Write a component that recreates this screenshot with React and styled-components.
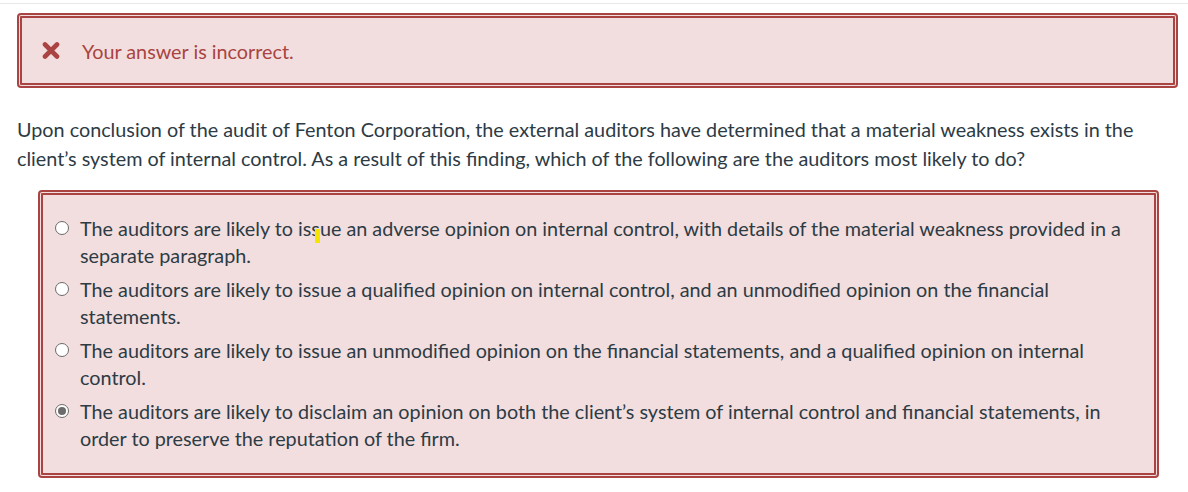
import React from 'react';
import styled, { createGlobalStyle } from 'styled-components';

const GlobalStyle = createGlobalStyle`
  body {
    margin: 0;
    background: #ffffff;
    font-family: Lato, "Open Sans", sans-serif;
    color: #2d3b45;
  }
`;

const Page = styled.div`
  padding-top: 3px;
`;

const TopRule = styled.div`
  height: 1px;
  background: #e8e8e8;
`;

const Content = styled.div`
  padding: 9px 10px 0 17px;
`;

const Alert = styled.div`
  display: flex;
  align-items: center;
  gap: 22px;
  height: 65px;
  padding: 0 20px;
  background: #f2dede;
  border: 5px double #a94442;
  border-radius: 4px;
  color: #a94442;
  font-size: 19.8px;
`;

const Question = styled.p`
  margin: 27px 0 17px;
  font-size: 19.8px;
  line-height: 29px;
  color: #2d3b45;
`;

const Answers = styled.div`
  position: relative;
  margin: 0 19px 0 21px;
  padding: 20px 12px 21px 12px;
  background: #f2dede;
  border: 5px double #a94442;
  border-radius: 4px;
  display: flex;
  flex-direction: column;
  gap: 7px;
`;

const Option = styled.label`
  display: flex;
  align-items: flex-start;
  gap: 11px;
  font-size: 19.8px;
  line-height: 27px;
  color: #2d3b45;
`;

const Radio = styled.span`
  flex: none;
  box-sizing: border-box;
  width: 14px;
  height: 14px;
  margin-top: 6px;
  border-radius: 50%;
  border: 1px solid #6b6b6b;
  background: #ffffff;
  display: flex;
  align-items: center;
  justify-content: center;

  &::after {
    content: '';
    width: 8px;
    height: 8px;
    border-radius: 50%;
    background: ${p => (p.$checked ? '#6b6b6b' : 'transparent')};
  }
`;

const Marker = styled.span`
  position: absolute;
  left: 272px;
  top: 34px;
  width: 5px;
  height: 14px;
  background: #f5e400;
`;

const XIcon = () => (
  <svg width="18" height="17" viewBox="0 0 18 17" aria-hidden="true">
    <path
      d="M3 2.5 L15 14.5 M15 2.5 L3 14.5"
      stroke="#a94442"
      strokeWidth="4.6"
      strokeLinecap="round"
      fill="none"
    />
  </svg>
);

const options = [
  {
    id: 1,
    text: 'The auditors are likely to issue an adverse opinion on internal control, with details of the material weakness provided in a separate paragraph.',
  },
  {
    id: 2,
    text: 'The auditors are likely to issue a qualified opinion on internal control, and an unmodified opinion on the financial statements.',
  },
  {
    id: 3,
    text: 'The auditors are likely to issue an unmodified opinion on the financial statements, and a qualified opinion on internal control.',
  },
  {
    id: 4,
    text: 'The auditors are likely to disclaim an opinion on both the client’s system of internal control and financial statements, in order to preserve the reputation of the firm.',
    checked: true,
  },
];

const App = () => (
  <Page>
    <GlobalStyle />
    <TopRule />
    <Content>
      <Alert>
        <XIcon />
        <span>Your answer is incorrect.</span>
      </Alert>
      <Question>
        Upon conclusion of the audit of Fenton Corporation, the external auditors have determined that a material weakness exists in the client’s system of internal control. As a result of this finding, which of the following are the auditors most likely to do?
      </Question>
      <Answers>
        <Marker />
        {options.map(o => (
          <Option key={o.id}>
            <Radio $checked={o.checked} />
            <span>{o.text}</span>
          </Option>
        ))}
      </Answers>
    </Content>
  </Page>
);

export default App;
